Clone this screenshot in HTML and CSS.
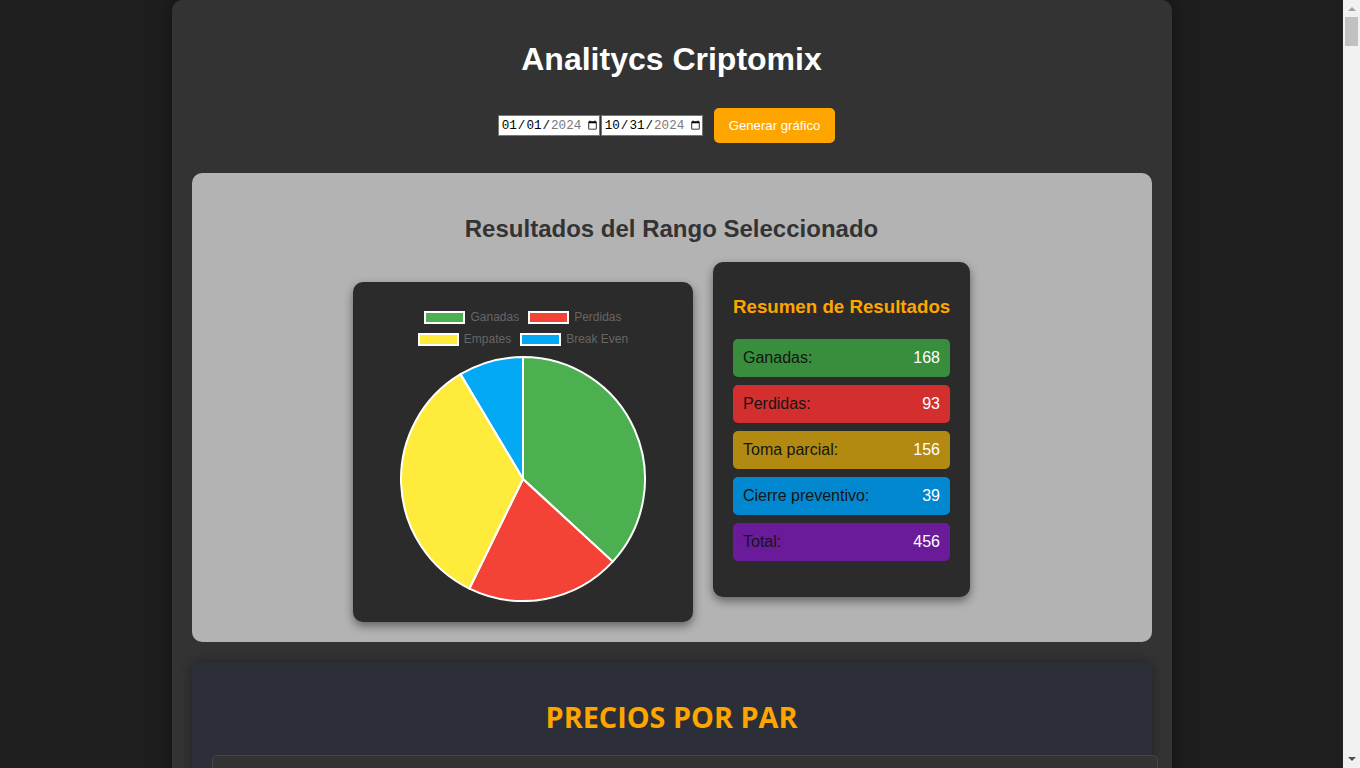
FILE: index.html
```html
<!DOCTYPE html>
<html lang="es">
<head>
<meta charset="utf-8">
<title>Analitycs Criptomix</title>
<link rel="stylesheet" href="styles.css">
</head>
<body>
<div class="container">
  <h1 class="title">Analitycs Criptomix</h1>
  <div class="controls">
    <input class="date" type="date" value="2024-01-01">
    <input class="date" type="date" value="2024-10-31">
    <button class="btn" type="button">Generar gráfico</button>
  </div>

  <section class="results">
    <h2 class="results-title">Resultados del Rango Seleccionado</h2>
    <div class="results-row">
      <div class="chart-box">
        <div class="legend">
          <div class="legend-row">
            <span class="legend-item"><span class="swatch sw-green"></span>Ganadas</span>
            <span class="legend-item"><span class="swatch sw-red"></span>Perdidas</span>
          </div>
          <div class="legend-row">
            <span class="legend-item"><span class="swatch sw-yellow"></span>Empates</span>
            <span class="legend-item"><span class="swatch sw-blue"></span>Break Even</span>
          </div>
        </div>
        <svg class="pie" width="300" height="252" viewBox="0 0 300 252">
          <path d="M150,129 L150,7 A122,122 0 0 1 239.76,211.63 Z" fill="#4CAF50"/>
          <path d="M150,129 L239.76,211.63 A122,122 0 0 1 96.42,238.60 Z" fill="#F44336"/>
          <path d="M150,129 L96.42,238.60 A122,122 0 0 1 87.55,24.20 Z" fill="#FFEB3B"/>
          <path d="M150,129 L87.55,24.20 A122,122 0 0 1 150,7 Z" fill="#03A9F4"/>
          <g fill="none" stroke="#fff" stroke-width="2" stroke-linejoin="round">
            <path d="M150,129 L150,7 A122,122 0 0 1 239.76,211.63 Z"/>
            <path d="M150,129 L239.76,211.63 A122,122 0 0 1 96.42,238.60 Z"/>
            <path d="M150,129 L96.42,238.60 A122,122 0 0 1 87.55,24.20 Z"/>
            <path d="M150,129 L87.55,24.20 A122,122 0 0 1 150,7 Z"/>
          </g>
        </svg>
      </div>
      <div class="summary">
        <h3 class="summary-title">Resumen de Resultados</h3>
        <div class="stat stat-green"><span class="stat-label">Ganadas:</span><span class="stat-value">168</span></div>
        <div class="stat stat-red"><span class="stat-label">Perdidas:</span><span class="stat-value">93</span></div>
        <div class="stat stat-gold"><span class="stat-label">Toma parcial:</span><span class="stat-value">156</span></div>
        <div class="stat stat-blue"><span class="stat-label">Cierre preventivo:</span><span class="stat-value">39</span></div>
        <div class="stat stat-purple"><span class="stat-label">Total:</span><span class="stat-value">456</span></div>
      </div>
    </div>
  </section>

  <section class="prices">
    <h2 class="prices-title">PRECIOS POR PAR</h2>
    <div class="prices-box"></div>
  </section>
</div>

<div class="scrollbar" aria-hidden="true">
  <span class="sb-arrow sb-up"></span>
  <span class="sb-thumb"></span>
  <span class="sb-arrow sb-down"></span>
</div>
</body>
</html>
```

FILE: styles.css
```css
html, body {
  margin: 0;
  padding: 0;
}

body {
  background: #1e1e1e;
  font-family: "Liberation Sans", Arial, sans-serif;
  padding-right: 17px;
}

/* classic browser scrollbar drawn over the right edge */
.scrollbar {
  position: fixed;
  top: 0;
  right: 0;
  width: 17px;
  height: 100vh;
  background: #f1f1f1;
  display: flex;
  flex-direction: column;
  align-items: center;
}

.sb-arrow {
  width: 0;
  height: 0;
  border-left: 4px solid transparent;
  border-right: 4px solid transparent;
}

.sb-up {
  margin-top: 7px;
  border-bottom: 4px solid #a3a3a3;
}

.sb-thumb {
  width: 13px;
  height: 29px;
  margin-top: 6px;
  background: #c1c1c1;
}

.sb-down {
  margin-top: auto;
  margin-bottom: 7px;
  border-top: 4px solid #505050;
}

.container {
  max-width: 1000px;
  margin: 0 auto;
  padding: 20px;
  box-sizing: border-box;
  background: #333333;
  border-radius: 10px;
  box-shadow: 0 0 20px rgba(0, 0, 0, 0.45);
}

.title {
  margin: 21px 0 0;
  font-size: 32px;
  font-weight: bold;
  color: #ffffff;
  text-align: center;
}

.controls {
  display: flex;
  justify-content: center;
  align-items: center;
  gap: 1px;
  margin: 30px 0 30px;
}

.date {
  width: 102px;
  height: 21px;
  box-sizing: border-box;
  margin: 0;
  padding: 1px 1px 1px 2px;
  border: 1px solid #767676;
  border-radius: 0;
  font-family: "Liberation Mono", monospace;
  font-size: 12.6px;
  background: #ffffff;
  color: #000000;
}

.date::-webkit-datetime-edit {
  padding: 0;
}

.date::-webkit-datetime-edit-fields-wrapper {
  padding: 0;
}

.date::-webkit-datetime-edit-year-field {
  color: #7a7a7a;
}

.date::-webkit-calendar-picker-indicator {
  width: 11px;
  height: 11px;
  margin: 0 0 0 3px;
  padding: 0;
}

.btn {
  margin: 0 10px;
  padding: 10px 15px;
  border: none;
  border-radius: 5px;
  background: #FFA500;
  color: #ffffff;
  font-family: "Liberation Sans", Arial, sans-serif;
  font-size: 13.2px;
  line-height: 15px;
  cursor: pointer;
}

.results {
  background: #b3b3b3;
  border-radius: 10px;
  padding: 20px;
}

.results-title {
  margin: 22px 0 19px;
  font-size: 24px;
  font-weight: bold;
  color: #333333;
  text-align: center;
}

.results-row {
  display: flex;
  justify-content: center;
  align-items: flex-start;
  gap: 20px;
}

.chart-box {
  width: 340px;
  height: 340px;
  box-sizing: border-box;
  margin-top: 20px;
  padding: 20px;
  background: #2b2b2b;
  border-radius: 10px;
  box-shadow: 0 4px 10px rgba(0, 0, 0, 0.45);
}

.legend {
  margin-top: 4px;
}

.legend-row {
  display: flex;
  justify-content: center;
  align-items: center;
  gap: 9px;
  height: 22px;
}

.legend-item {
  display: flex;
  align-items: center;
  font-size: 12px;
  color: #666666;
}

.swatch {
  width: 37px;
  height: 9px;
  border: 2px solid #ffffff;
  margin-right: 5px;
}

.sw-green { background: #4CAF50; }
.sw-red { background: #F44336; }
.sw-yellow { background: #FFEB3B; }
.sw-blue { background: #03A9F4; }

.pie {
  display: block;
}

.summary {
  width: 257px;
  box-sizing: border-box;
  margin-right: 20px;
  padding: 34px 20px 36px;
  background: #2b2b2b;
  border-radius: 10px;
  box-shadow: 0 4px 10px rgba(0, 0, 0, 0.45);
}

.summary-title {
  margin: 0 0 21px;
  font-size: 18.72px;
  font-weight: bold;
  color: #FFA500;
  text-align: center;
  white-space: nowrap;
}

.stat {
  display: flex;
  justify-content: space-between;
  align-items: center;
  padding: 10px;
  margin-bottom: 8px;
  border-radius: 5px;
  font-size: 16px;
}

.stat:last-child {
  margin-bottom: 0;
}

.stat-label {
  color: #151515;
}

.stat-value {
  color: #ffffff;
}

.stat-green { background: #388E3C; }
.stat-red { background: #D32F2F; }
.stat-gold { background: #B28A12; }
.stat-blue { background: #0288D1; }
.stat-purple { background: #6A1B9A; }

.prices {
  margin-top: 20px;
  padding: 20px;
  background: #2c2f37;
  border-radius: 8px;
  box-shadow: 0 0 12px rgba(0, 0, 0, 0.35);
}

.prices-title {
  margin: 15px 0 19px;
  font-family: "Open Sans", "Noto Sans", sans-serif;
  font-size: 28.8px;
  font-weight: bold;
  color: #FFA500;
  text-align: center;
}

.prices-box {
  width: 100%;
  height: 18600px;
  padding: 12px;
  background: #333333;
  border: 1px solid #464646;
  border-radius: 5px;
}
```
